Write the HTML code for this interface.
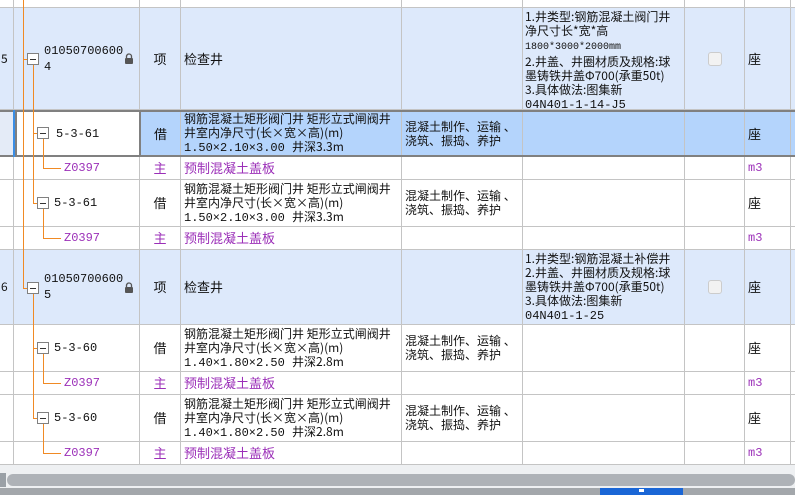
<!DOCTYPE html>
<html><head><meta charset="utf-8"><style>
*{margin:0;padding:0;box-sizing:border-box}
body{width:795px;height:495px;overflow:hidden;background:#eef0f2;font-family:"Noto Sans CJK SC","Liberation Sans",sans-serif;font-size:12px;color:#111;position:relative}
.row{position:absolute;left:0;width:795px;border-bottom:1px solid #c4c4c4;background:#fff}
.c{position:absolute;top:0;bottom:0;display:flex;align-items:center;border-right:1px solid #c4c4c4;line-height:14px;white-space:nowrap;overflow:hidden}
.blue{background:#dde9fb}
.sel{background:#b4d4fc}
.pu{color:#9b2fb8}
.sm{font-size:12px;font-family:"Liberation Mono","Noto Sans CJK SC",monospace}
.v{position:absolute;background:#f08a24;width:1px}
.h{position:absolute;background:#f08a24;height:1px}
.box{position:absolute;width:12px;height:12px;border:1px solid #808080;background:#fff}
.box:after{content:"";position:absolute;left:2px;top:5px;width:6px;height:1px;background:#333}
</style></head><body>
<div style="position:absolute;left:0;top:0;width:795px;height:465px;background:#fff"></div>
<div class="row" style="top:0;height:8px">
<div class="c" style="left:0;width:14px"></div><div class="c" style="left:14px;width:126px"></div><div class="c" style="left:140px;width:41px"></div><div class="c" style="left:181px;width:221px"></div><div class="c" style="left:402px;width:121px"></div><div class="c" style="left:523px;width:162px"></div><div class="c" style="left:685px;width:60px"></div><div class="c" style="left:745px;width:46px"></div></div>

<div class="row blue" style="top:8px;height:102px">
<div class="c" style="left:0;width:14px;padding-left:1px">5</div>
<div class="c sm" style="left:14px;width:126px;padding-left:30px;line-height:16px">01050700600<br>4</div>
<div class="c" style="left:140px;width:41px;justify-content:center;font-size:13px">项</div>
<div class="c" style="left:181px;width:221px;padding-left:3px;font-size:13px">检查井</div>
<div class="c" style="left:402px;width:121px"></div>
<div class="c" style="left:523px;width:162px;padding-left:2px;align-items:flex-start;padding-top:2px"><div>1.井类型:钢筋混凝土阀门井<br>净尺寸长*宽*高<br><span class="sm" style="font-size:10px">1800*3000*2000mm</span><br>2.井盖、井圈材质及规格:球<br>墨铸铁井盖Φ700(承重50t)<br>3.具体做法:图集新<br><span class="sm">04N401-1-14-J5</span></div></div>
<div class="c" style="left:685px;width:60px;justify-content:center"><div style="width:14px;height:14px;border:1px solid #ccc;border-radius:3px;background:#f2f2f2"></div></div>
<div class="c" style="left:745px;width:46px;padding-left:3px;font-size:13px">座</div></div>

<div class="row sel" style="top:110px;height:47px;border-top:2px solid #808080;border-bottom:2px solid #808080">
<div class="c" style="left:0;width:14px;background:#e4ebf7"></div>
<div style="position:absolute;left:13px;top:-2px;width:2px;height:47px;background:#3a8ee6"></div>
<div class="c sm" style="left:15px;width:126px;background:#fff;border:2px solid #808080;border-top:0;border-bottom:0;padding-left:39px">5-3-61</div>
<div class="c" style="left:141px;width:40px;justify-content:center;font-size:13px">借</div>
<div class="c" style="left:181px;width:221px;padding-left:3px"><div>钢筋混凝土矩形阀门井 矩形立式闸阀井<br>井室内净尺寸(长×宽×高)(m)<br><span class="sm">1.50×2.10×3.00 </span>井深3.3m</div></div>
<div class="c" style="left:402px;width:121px;padding-left:3px">混凝土制作、运输 、<br>浇筑、振捣、养护</div>
<div class="c" style="left:523px;width:162px"></div><div class="c" style="left:685px;width:60px"></div>
<div class="c" style="left:745px;width:46px;padding-left:3px;font-size:13px">座</div></div>

<div class="row" style="top:157px;height:23px"><div class="c" style="left:0;width:14px"></div><div class="c pu sm" style="left:14px;width:126px;padding-left:50px">Z0397</div><div class="c pu" style="left:140px;width:41px;justify-content:center;font-size:13px">主</div><div class="c pu" style="left:181px;width:221px;padding-left:3px;font-size:13px">预制混凝土盖板</div><div class="c" style="left:402px;width:121px"></div><div class="c" style="left:523px;width:162px"></div><div class="c" style="left:685px;width:60px"></div><div class="c pu sm" style="left:745px;width:46px;padding-left:3px">m3</div></div>

<div class="row" style="top:180px;height:47px"><div class="c" style="left:0;width:14px"></div><div class="c sm" style="left:14px;width:126px;padding-left:40px">5-3-61</div><div class="c" style="left:140px;width:41px;justify-content:center;font-size:13px">借</div><div class="c" style="left:181px;width:221px;padding-left:3px"><div>钢筋混凝土矩形阀门井 矩形立式闸阀井<br>井室内净尺寸(长×宽×高)(m)<br><span class="sm">1.50×2.10×3.00 </span>井深3.3m</div></div><div class="c" style="left:402px;width:121px;padding-left:3px">混凝土制作、运输 、<br>浇筑、振捣、养护</div><div class="c" style="left:523px;width:162px"></div><div class="c" style="left:685px;width:60px"></div><div class="c" style="left:745px;width:46px;padding-left:3px;font-size:13px">座</div></div>

<div class="row" style="top:227px;height:23px"><div class="c" style="left:0;width:14px"></div><div class="c pu sm" style="left:14px;width:126px;padding-left:50px">Z0397</div><div class="c pu" style="left:140px;width:41px;justify-content:center;font-size:13px">主</div><div class="c pu" style="left:181px;width:221px;padding-left:3px;font-size:13px">预制混凝土盖板</div><div class="c" style="left:402px;width:121px"></div><div class="c" style="left:523px;width:162px"></div><div class="c" style="left:685px;width:60px"></div><div class="c pu sm" style="left:745px;width:46px;padding-left:3px">m3</div></div>

<div class="row blue" style="top:250px;height:75px">
<div class="c" style="left:0;width:14px;padding-left:1px">6</div>
<div class="c sm" style="left:14px;width:126px;padding-left:30px;line-height:16px">01050700600<br>5</div>
<div class="c" style="left:140px;width:41px;justify-content:center;font-size:13px">项</div>
<div class="c" style="left:181px;width:221px;padding-left:3px;font-size:13px">检查井</div>
<div class="c" style="left:402px;width:121px"></div>
<div class="c" style="left:523px;width:162px;padding-left:2px"><div>1.井类型:钢筋混凝土补偿井<br>2.井盖、井圈材质及规格:球<br>墨铸铁井盖Φ700(承重50t)<br>3.具体做法:图集新<br><span class="sm">04N401-1-25</span></div></div>
<div class="c" style="left:685px;width:60px;justify-content:center"><div style="width:14px;height:14px;border:1px solid #ccc;border-radius:3px;background:#f2f2f2"></div></div>
<div class="c" style="left:745px;width:46px;padding-left:3px;font-size:13px">座</div></div>

<div class="row" style="top:325px;height:47px"><div class="c" style="left:0;width:14px"></div><div class="c sm" style="left:14px;width:126px;padding-left:40px">5-3-60</div><div class="c" style="left:140px;width:41px;justify-content:center;font-size:13px">借</div><div class="c" style="left:181px;width:221px;padding-left:3px"><div>钢筋混凝土矩形阀门井 矩形立式闸阀井<br>井室内净尺寸(长×宽×高)(m)<br><span class="sm">1.40×1.80×2.50 </span>井深2.8m</div></div><div class="c" style="left:402px;width:121px;padding-left:3px">混凝土制作、运输 、<br>浇筑、振捣、养护</div><div class="c" style="left:523px;width:162px"></div><div class="c" style="left:685px;width:60px"></div><div class="c" style="left:745px;width:46px;padding-left:3px;font-size:13px">座</div></div>

<div class="row" style="top:372px;height:23px"><div class="c" style="left:0;width:14px"></div><div class="c pu sm" style="left:14px;width:126px;padding-left:50px">Z0397</div><div class="c pu" style="left:140px;width:41px;justify-content:center;font-size:13px">主</div><div class="c pu" style="left:181px;width:221px;padding-left:3px;font-size:13px">预制混凝土盖板</div><div class="c" style="left:402px;width:121px"></div><div class="c" style="left:523px;width:162px"></div><div class="c" style="left:685px;width:60px"></div><div class="c pu sm" style="left:745px;width:46px;padding-left:3px">m3</div></div>

<div class="row" style="top:395px;height:47px"><div class="c" style="left:0;width:14px"></div><div class="c sm" style="left:14px;width:126px;padding-left:40px">5-3-60</div><div class="c" style="left:140px;width:41px;justify-content:center;font-size:13px">借</div><div class="c" style="left:181px;width:221px;padding-left:3px"><div>钢筋混凝土矩形阀门井 矩形立式闸阀井<br>井室内净尺寸(长×宽×高)(m)<br><span class="sm">1.40×1.80×2.50 </span>井深2.8m</div></div><div class="c" style="left:402px;width:121px;padding-left:3px">混凝土制作、运输 、<br>浇筑、振捣、养护</div><div class="c" style="left:523px;width:162px"></div><div class="c" style="left:685px;width:60px"></div><div class="c" style="left:745px;width:46px;padding-left:3px;font-size:13px">座</div></div>

<div class="row" style="top:442px;height:23px"><div class="c" style="left:0;width:14px"></div><div class="c pu sm" style="left:14px;width:126px;padding-left:50px">Z0397</div><div class="c pu" style="left:140px;width:41px;justify-content:center;font-size:13px">主</div><div class="c pu" style="left:181px;width:221px;padding-left:3px;font-size:13px">预制混凝土盖板</div><div class="c" style="left:402px;width:121px"></div><div class="c" style="left:523px;width:162px"></div><div class="c" style="left:685px;width:60px"></div><div class="c pu sm" style="left:745px;width:46px;padding-left:3px">m3</div></div>

<div class="v" style="left:23px;top:0;height:288px"></div>
<div class="h" style="left:23px;top:59px;width:5px"></div>
<div class="box" style="left:27px;top:53px"></div>
<div class="v" style="left:33px;top:65px;height:139px"></div>
<div class="h" style="left:33px;top:133px;width:5px"></div>
<div class="box" style="left:37px;top:127px"></div>
<div class="v" style="left:43px;top:139px;height:30px"></div>
<div class="h" style="left:43px;top:168px;width:18px"></div>
<div class="h" style="left:33px;top:203px;width:5px"></div>
<div class="box" style="left:37px;top:197px"></div>
<div class="v" style="left:43px;top:209px;height:30px"></div>
<div class="h" style="left:43px;top:238px;width:18px"></div>
<div class="h" style="left:23px;top:288px;width:5px"></div>
<div class="box" style="left:27px;top:282px"></div>
<div class="v" style="left:33px;top:294px;height:125px"></div>
<div class="h" style="left:33px;top:348px;width:5px"></div>
<div class="box" style="left:37px;top:342px"></div>
<div class="v" style="left:43px;top:354px;height:30px"></div>
<div class="h" style="left:43px;top:383px;width:18px"></div>
<div class="h" style="left:33px;top:418px;width:5px"></div>
<div class="box" style="left:37px;top:412px"></div>
<div class="v" style="left:43px;top:424px;height:30px"></div>
<div class="h" style="left:43px;top:453px;width:18px"></div>
<svg style="position:absolute;left:124px;top:53px" width="10" height="11"><path d="M2.5 5V3.5a2.5 2.5 0 0 1 5 0V5" fill="none" stroke="#555" stroke-width="1.3"/><rect x="1" y="5" width="8" height="6" rx="1" fill="#555"/></svg>
<svg style="position:absolute;left:124px;top:282px" width="10" height="11"><path d="M2.5 5V3.5a2.5 2.5 0 0 1 5 0V5" fill="none" stroke="#555" stroke-width="1.3"/><rect x="1" y="5" width="8" height="6" rx="1" fill="#555"/></svg>
<div style="position:absolute;left:0;top:473px;width:6px;height:14px;background:#9aa0a6"></div>
<div style="position:absolute;left:7px;top:474px;width:788px;height:12px;border-radius:6px;background:#aeb2b7"></div>
<div style="position:absolute;left:0;top:488px;width:795px;height:7px;background:#a3a7ab"></div>
<div style="position:absolute;left:600px;top:488px;width:83px;height:7px;background:#1a66d6"></div>
<div style="position:absolute;left:639px;top:489px;width:5px;height:3px;background:#fff"></div>
</body></html>
